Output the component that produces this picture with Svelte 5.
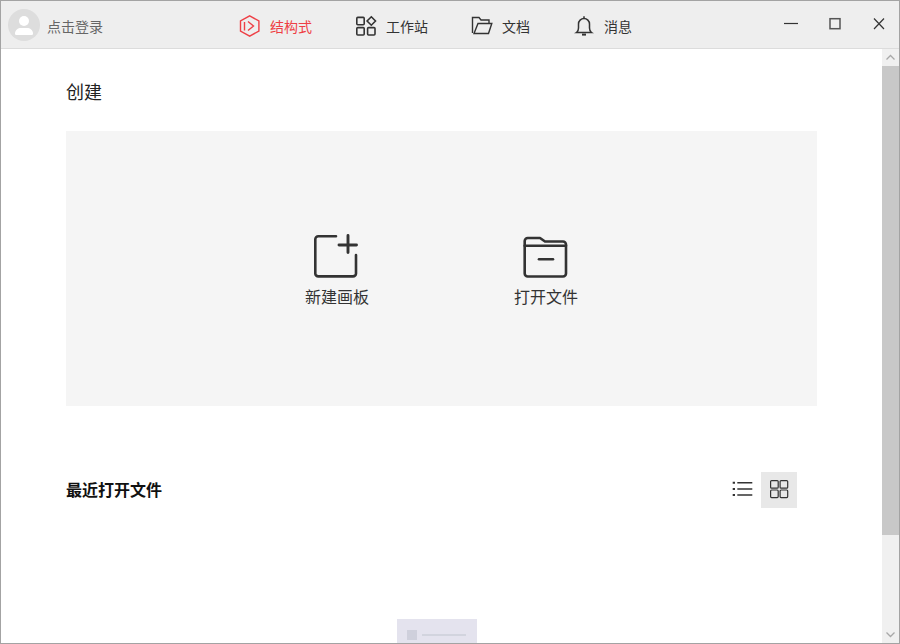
<script>
  const tabs = [
    { label: '结构式', icon: 'hex', active: true, w: 116 },
    { label: '工作站', icon: 'grid', w: 116 },
    { label: '文档', icon: 'folder', w: 102 },
    { label: '消息', icon: 'bell', w: 100 }
  ];
</script>

<div class="window">
  <header class="bar">
    <div class="user">
      <div class="avatar">
        <svg viewBox="0 0 32 32" width="32" height="32">
          <circle cx="16" cy="12" r="5" fill="#fff"/>
          <path d="M7 24.500c0-3.500 3-5.500 6-5.500h6c3 0 6 2 6 5.500 0 1-.7 1.500-1.500 1.500h-15c-.8 0-1.500-.5-1.500-1.500z" fill="#fff"/>
        </svg>
      </div>
      <span>点击登录</span>
    </div>
    <nav class="tabs">
      {#each tabs as t}
        <div class="tab" class:active={t.active} style="width:{t.w}px">
          <span class="tab-icon">
            {#if t.icon === 'hex'}
              <svg viewBox="0 0 22 22" width="22" height="22" fill="none" stroke="#ee3f45" stroke-width="1.400">
                <path d="M10.700.9l9.200 5.100v10l-9.200 5.100-9.200-5.100V6z"/>
                <path d="M5.500 7v8.500M9 6.500l5.500 4.500L9 15.500"/>
              </svg>
            {:else if t.icon === 'grid'}
              <svg viewBox="0 0 22 22" width="22" height="22" fill="none" stroke="#333" stroke-width="1.600">
                <rect x="1.800" y="2.400" width="7.400" height="7.400" rx="1"/>
                <rect x="1.800" y="12.600" width="7.400" height="7.400" rx="1"/>
                <rect x="12.600" y="12.600" width="7.400" height="7.400" rx="1"/>
                <path d="M16.300 1.800l4.200 4.200-4.200 4.200-4.200-4.200z"/>
              </svg>
            {:else if t.icon === 'folder'}
              <svg viewBox="0 0 22 22" width="22" height="22" fill="none" stroke="#333" stroke-width="1.400">
                <path d="M1.500 18V2.500H8L10 5h8v3"/>
                <path d="M7 8.500h13.800L17.500 18.500H3z"/>
              </svg>
            {:else}
              <svg viewBox="0 0 22 22" width="22" height="22" fill="none" stroke="#333" stroke-width="1.500">
                <path d="M3.500 17.500c1.500-1 2-2.500 2-4.500V9a5.500 5.500 0 0 1 11 0v4c0 2 .5 3.500 2 4.500z"/>
                <path d="M11 1.200v2.300"/>
                <path d="M9 19.600h4" stroke-width="2"/>
              </svg>
            {/if}
          </span>
          <span class="tab-label">{t.label}</span>
        </div>
      {/each}
    </nav>
    <div class="controls">
      <svg viewBox="0 0 44 44" width="44" height="44" fill="none" stroke="#333" stroke-width="1.200"><path d="M17 22.500h14"/></svg>
      <svg viewBox="0 0 44 44" width="44" height="44" fill="none" stroke="#555" stroke-width="1.500"><rect x="19" y="17.700" width="10" height="10"/></svg>
      <svg viewBox="0 0 44 44" width="44" height="44" fill="none" stroke="#333" stroke-width="1.200"><path d="M19 17.500l10 10.500M29 17.500L19 28"/></svg>
    </div>
  </header>

  <div class="body">
    <main class="main">
      <h2 class="create-title">创建</h2>
      <section class="panel">
        <div class="action">
          <svg viewBox="0 0 46 46" width="46" height="46" fill="none" stroke="#333" stroke-width="2.600" stroke-linecap="round" stroke-linejoin="round">
            <path d="M22 2.300H4.300a3 3 0 0 0-3 3v34.100a3 3 0 0 0 3 3H39a3 3 0 0 0 3-3V21"/>
            <path d="M34 1.500v17M25 11h17.500" stroke-width="2.900"/>
          </svg>
          <span>新建画板</span>
        </div>
        <div class="action">
          <svg viewBox="0 0 46 46" width="46" height="46" fill="none" stroke="#333" stroke-width="2.600" stroke-linecap="round" stroke-linejoin="round">
            <path d="M1.700 7a3 3 0 0 1 3-3H17l5 3.500h18a3 3 0 0 1 3 3v29a3 3 0 0 1-3 3H4.700a3 3 0 0 1-3-3z"/>
            <path d="M1.700 11.700H43"/>
            <path d="M16 25.300h14"/>
          </svg>
          <span>打开文件</span>
        </div>
      </section>
      <div class="recent">
        <h3>最近打开文件</h3>
        <div class="views">
          <div class="view">
            <svg viewBox="0 0 36 36" width="36" height="36" fill="none" stroke="#333" stroke-width="1.500">
              <path d="M13.300 10.700h15M13.300 17h15M13.300 23h15"/>
              <path d="M8.700 10.700H11M8.700 17H11M8.700 23H11" stroke-width="2"/>
            </svg>
          </div>
          <div class="view selected">
            <svg viewBox="0 0 36 36" width="36" height="36" fill="none" stroke="#333" stroke-width="1.200">
              <rect x="9.600" y="8.600" width="7.600" height="7.600" rx="1"/>
              <rect x="19.100" y="8.600" width="7.600" height="7.600" rx="1"/>
              <rect x="9.600" y="18" width="7.600" height="7.600" rx="1"/>
              <rect x="19.100" y="18" width="7.600" height="7.600" rx="1"/>
            </svg>
          </div>
        </div>
      </div>
      <div class="thumb-row">
        <div class="thumb"><i></i><b></b></div>
      </div>
    </main>
    <aside class="scrollbar">
      <div class="arrow">
        <svg viewBox="0 0 17 17" width="17" height="17" fill="none" stroke="#a8a8a8" stroke-width="1.300"><path d="M4.500 10.500l4-4 4 4"/></svg>
      </div>
      <div class="thumb-bar"></div>
      <div class="track"></div>
      <div class="arrow">
        <svg viewBox="0 0 17 17" width="17" height="17" fill="none" stroke="#a8a8a8" stroke-width="1.300"><path d="M4.500 6.500l4 4 4-4"/></svg>
      </div>
    </aside>
  </div>
</div>

<style>
  :global(body) {
    margin: 0;
    overflow: hidden;
  }
  .window {
    box-sizing: border-box;
    width: 900px;
    height: 644px;
    border: 1px solid #a3a3a3;
    display: flex;
    flex-direction: column;
    background: #fff;
    overflow: hidden;
    font-family: "Noto Sans CJK SC", "Noto Sans", sans-serif;
    color: #222;
  }
  .bar {
    flex: none;
    height: 47px;
    background: #eeeeee;
    border-bottom: 1px solid #dcdcdc;
    display: flex;
    align-items: center;
    position: relative;
  }
  .user {
    display: flex;
    align-items: center;
    gap: 7px;
    margin-left: 7px;
    width: 231px;
    font-size: 14px;
    color: #666;
  }
  .user span {
    padding-top: 2px;
  }
  .avatar {
    width: 32px;
    height: 32px;
    border-radius: 50%;
    background: #dddddd;
    overflow: hidden;
    display: flex;
  }
  .tabs {
    display: flex;
    align-items: center;
    height: 100%;
    padding-top: 2px;
    box-sizing: border-box;
  }
  .tab {
    display: flex;
    align-items: center;
    gap: 9px;
    font-size: 14px;
    color: #333;
  }
  .tab.active {
    color: #ee3f45;
  }
  .tab-icon {
    display: flex;
    width: 22px;
    height: 22px;
  }
  .tab-label {
    line-height: 20px;
  }
  .controls {
    margin-left: auto;
    display: flex;
    height: 100%;
    align-items: flex-start;
  }
  .body {
    flex: 1;
    min-height: 0;
    display: flex;
  }
  .main {
    flex: 1;
    min-width: 0;
    overflow: hidden;
    padding-left: 65px;
    padding-right: 65px;
    box-sizing: border-box;
  }
  .create-title {
    margin: 0;
    height: 82px;
    padding-top: 29px;
    box-sizing: border-box;
    font-size: 18px;
    font-weight: 400;
    line-height: 26px;
    color: #222;
  }
  .panel {
    height: 275px;
    background: #f5f5f5;
    display: flex;
    padding-top: 103px;
    padding-left: 239px;
    box-sizing: border-box;
    gap: 145px;
  }
  .action {
    width: 64px;
    height: 80px;
    display: flex;
    flex-direction: column;
    align-items: center;
    color: #333;
    gap: 4px;
  }
  .action span {
    font-size: 16px;
    line-height: 24px;
    white-space: nowrap;
  }
  .recent {
    margin-top: 66px;
    height: 36px;
    display: flex;
    align-items: center;
    padding-right: 20px;
  }
  .recent h3 {
    margin: 0 0 2px;
    font-size: 16px;
    font-weight: 700;
    color: #111;
  }
  .views {
    margin-left: auto;
    display: flex;
    gap: 1px;
  }
  .view {
    width: 36px;
    height: 36px;
    display: flex;
  }
  .view.selected {
    background: #e8e8e8;
  }
  .thumb-row {
    margin-top: 111px;
    padding-left: 331px;
  }
  .thumb {
    width: 80px;
    height: 40px;
    background: #e4e3ee;
    display: flex;
    align-items: flex-start;
    gap: 5px;
    padding: 11px 0 0 10px;
    box-sizing: border-box;
  }
  .thumb i {
    width: 10px;
    height: 10px;
    background: #cfd0dc;
  }
  .thumb b {
    width: 44px;
    height: 2px;
    margin-top: 4px;
    background: #d2d4de;
  }
  .scrollbar {
    flex: none;
    width: 17px;
    display: flex;
    flex-direction: column;
    background: #f0f0f0;
  }
  .arrow {
    height: 17px;
    flex: none;
    display: flex;
  }
  .thumb-bar {
    height: 469px;
    background: #c8c8c8;
    flex: none;
  }
  .track {
    flex: 1;
  }
</style>
